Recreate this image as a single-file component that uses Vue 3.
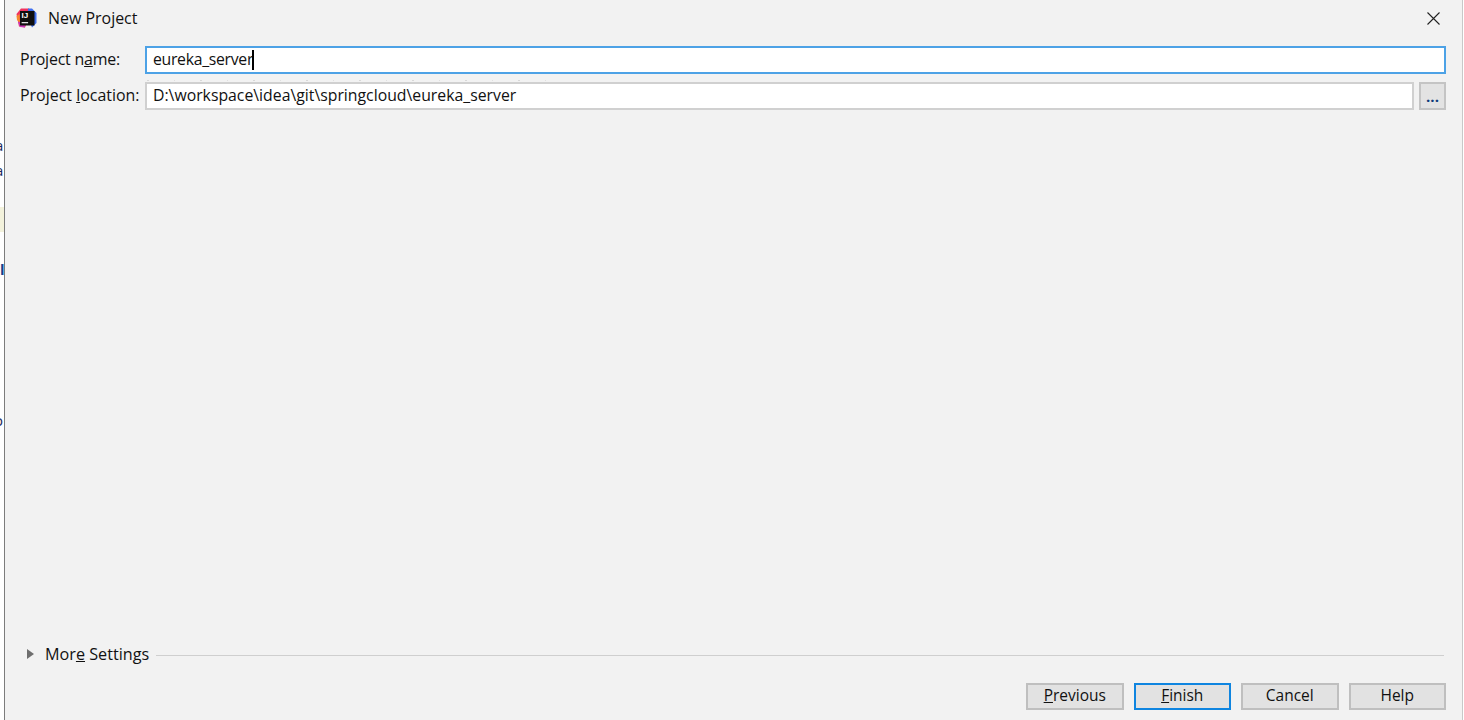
<script setup>
const buttons = [
  { before: '', key: 'P', after: 'revious' },
  { before: '', key: 'F', after: 'inish', primary: true },
  { before: 'Cancel', key: '', after: '' },
  { before: 'Help', key: '', after: '' }
]
</script>

<template>
  <div class="screen">
    <div class="behind">
      <span class="peek peek-a1">a</span>
      <span class="peek peek-a2">a</span>
      <span class="peek-yellow"></span>
      <span class="peek peek-l">l</span>
      <span class="peek peek-o">o</span>
    </div>
    <div class="dialog">
      <header class="titlebar">
        <svg class="logo" width="21" height="20" viewBox="0 0 21 20">
          <path d="M0.5 6 L5 0.5 L13 0.5 L14 8 L9 19.5 L3 18.5 Z" fill="#f0325f" />
          <path d="M0.5 8 L3.5 6 L4 15 L1 12 Z" fill="#f58a2c" />
          <path d="M12 0.5 L16 0.5 L20.5 5 L20.5 15 L16 19.5 L12 10 Z" fill="#3f6ff0" />
          <path d="M2 14 L9 14 L9 19.5 L4 19 Z" fill="#c736b8" />
          <rect x="4" y="3" width="14.5" height="14.5" fill="#0e0e0e" />
          <text x="5.6" y="10.4" class="logo-text">IJ</text>
          <rect x="5.6" y="14" width="6.5" height="1.3" fill="#ddd" />
        </svg>
        <span class="title">New Project</span>
        <svg class="close" width="13" height="13" viewBox="0 0 13 13">
          <path d="M0.5 0.5 L12.5 12.5 M12.5 0.5 L0.5 12.5" stroke="#222" stroke-width="1.1" fill="none" />
        </svg>
      </header>

      <section class="form">
        <div class="row">
          <label class="label name-label">Project n<u>a</u>me:</label>
          <div class="input focused"><span class="name-value">eureka_server</span><span class="caret"></span></div>
        </div>
        <div class="row second">
          <label class="label">Project <u>l</u>ocation:</label>
          <div class="input plain">
            <span class="ticks"></span>
            D:\workspace\idea\git\springcloud\eureka_server
          </div>
          <button class="browse">...</button>
        </div>
      </section>

      <div class="spacer"></div>

      <div class="more">
        <span class="triangle"></span>
        <span class="more-label">Mor<u>e</u> Settings</span>
        <span class="rule"></span>
      </div>

      <footer class="actions">
        <button v-for="b in buttons" :key="b.before + b.after" class="btn" :class="{ primary: b.primary }">{{ b.before }}<u v-if="b.key">{{ b.key }}</u>{{ b.after }}</button>
      </footer>
    </div>
    <div class="edge"></div>
  </div>
</template>

<style>
html, body { margin: 0; background: #fff; overflow: hidden; }
</style>

<style scoped>
.screen {
  width: 1464px;
  height: 720px;
  display: flex;
  font-family: "Open Sans", "Noto Sans", sans-serif;
  font-size: 15.95px;
  color: #111;
  overflow: hidden;
}
.behind {
  position: relative;
  width: 4px;
  flex: none;
  background: #fff;
  overflow: hidden;
}
.peek {
  position: absolute;
  color: #1a2a60;
  font-size: 15px;
  line-height: 18px;
}
.peek-a1 { left: -5px; top: 136px; }
.peek-a2 { left: -5px; top: 161px; }
.peek-l { left: 0; top: 260px; font-weight: 700; color: #14408c; }
.peek-o { left: -6px; top: 411px; }
.peek-yellow {
  position: absolute;
  left: 0;
  top: 207px;
  width: 4px;
  height: 25px;
  background: #f3f2dc;
}
.dialog {
  flex: 1;
  display: flex;
  flex-direction: column;
  background: #f2f2f2;
  border-left: 1px solid #7c7c7c;
  min-width: 0;
}
.edge {
  width: 2px;
  flex: none;
  background: #fff;
  border-left: 1px solid #c8c8c8;
  box-sizing: border-box;
}
.titlebar {
  height: 36px;
  display: flex;
  align-items: center;
  padding: 0 22px 0 11px;
  box-sizing: border-box;
}
.logo { flex: none; margin-top: -1px; }
.logo-text {
  font-family: "Liberation Sans", sans-serif;
  font-size: 8px;
  font-weight: 700;
  fill: #fff;
}
.title { margin-left: 11px; flex: 1; line-height: 20px; }
.form {
  padding: 10px 16px 0 15px;
}
.row {
  display: flex;
  align-items: center;
  height: 28px;
}
.second { margin-top: 8px; }
.label {
  width: 125px;
  flex: none;
  white-space: nowrap;
  padding-bottom: 2px;
}
.name-label { letter-spacing: -0.2px; }
.input {
  position: relative;
  flex: 1;
  height: 28px;
  box-sizing: border-box;
  background: #fff;
  padding-left: 6px;
  line-height: 22px;
  font-size: 15.8px;
  white-space: nowrap;
  min-width: 0;
}
.focused {
  border: 2px solid #4da2e6;
  padding-left: 6px;
}
.plain {
  border: 2px solid #d0d0d0;
}
.name-value { letter-spacing: -0.3px; }
.ticks {
  position: absolute;
  left: 0;
  top: -4px;
  width: 408px;
  height: 1px;
  background: repeating-linear-gradient(90deg, #d8d8d8 0 2px, transparent 2px 27px, #e0e0e0 27px 28px, transparent 28px 53px);
}
.caret {
  display: inline-block;
  width: 2px;
  height: 20px;
  margin-left: -1px;
  background: #000;
  vertical-align: -5px;
}
.browse {
  width: 27px;
  height: 28px;
  margin-left: 5px;
  flex: none;
  box-sizing: border-box;
  border: 2px solid #c4c4c4;
  background: #e3e3e3;
  color: #0d3a7a;
  font: 700 15px "Open Sans", sans-serif;
  padding: 0;
  line-height: 20px;
}
.spacer { flex: 1; }
.more {
  display: flex;
  align-items: center;
  height: 24px;
  padding: 0 18px 0 22px;
  margin-bottom: 16px;
}
.triangle {
  width: 0;
  height: 0;
  border-left: 7px solid #6f6f6f;
  border-top: 5.5px solid transparent;
  border-bottom: 5.5px solid transparent;
  margin-top: -2px;
}
.more-label { margin-left: 11px; white-space: nowrap; padding-bottom: 2px; font-size: 16.2px; }
.rule {
  flex: 1;
  height: 1px;
  margin-left: 7px;
  background: #cfcfcf;
}
.actions {
  display: flex;
  justify-content: flex-end;
  gap: 10px;
  padding: 0 16px 10px 0;
}
.btn {
  width: 97.5px;
  height: 27px;
  box-sizing: border-box;
  border: 2px solid #bfbfbf;
  background: #e2e2e2;
  font: 15.5px "Open Sans", sans-serif;
  color: #111;
  padding: 0 0 3px;
  line-height: 20px;
}
.primary { border-color: #0f85e0; }
</style>
